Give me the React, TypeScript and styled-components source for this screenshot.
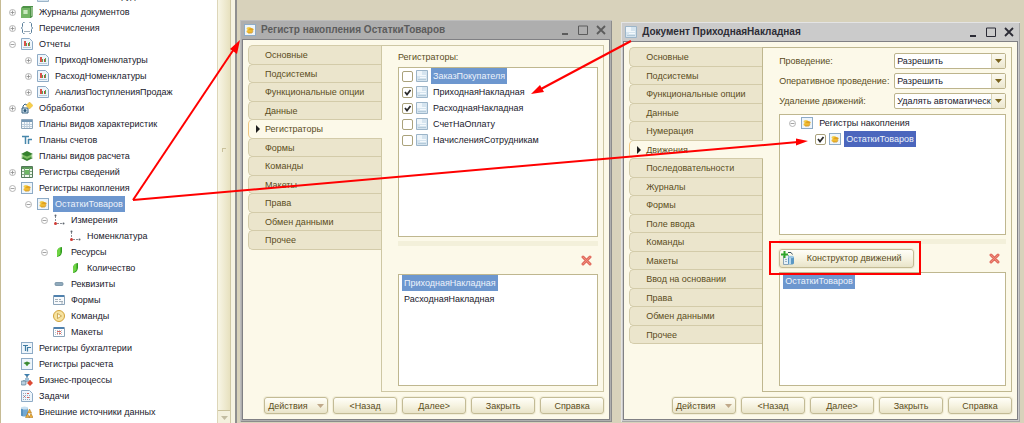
import React from "react";
import styled, { createGlobalStyle, css } from "styled-components";

const c = {
  paper: "#fcf9e9",
  tab: "#ebe5cc",
  tabLine: "#d3cba9",
  line: "#bfb78f",
  ink: "#5b4d1c",
  text: "#20202c",
  pick: "#6d97cf",
  pickActive: "#4b66bd",
  desk: "#d8d2bb",
  red: "#ff0000",
};

const GlobalStyle = createGlobalStyle`
  *, *::before, *::after { box-sizing: border-box; }
  body { margin: 0; background: ${c.desk}; }
  body, button, select, input {
    font-family: "Liberation Sans", Arial, sans-serif;
    font-size: 9px;
    line-height: 16px;
  }
`;

/* ---------- page ---------- */

const Page = styled.div`
  position: relative;
  display: flex;
  min-height: 100vh;
  overflow: hidden;
`;

const Sidebar = styled.aside`
  flex: none;
  display: flex;
  width: 237px;
  border-left: 1px solid #c6bb94;
  border-right: 2px solid #8f8f8f;
  background: #fff;
`;

/* The list is scrolled: its first row is cut by the top edge. */
const Tree = styled.ul`
  flex: 1;
  min-width: 0;
  margin: -12px 0 0;
  padding: 0 0 0 2px;
  list-style: none;
`;

const ScrollBar = styled.div`
  display: flex;
  flex-direction: column;
  align-items: center;
  justify-content: space-between;
  width: 14px;
  border-left: 1px solid #ddd6b8;
  border-right: 1px solid #cfc8a4;
  background: linear-gradient(90deg, #f8f6e6, #e7e1bf);
`;

const ScrollGrip = styled.span`
  width: 4px;
  height: 4px;
  margin-top: 148px;
  border-top: 1px solid #c9c19b;
  border-left: 1px solid #c9c19b;
`;

const ScrollDown = styled.button`
  display: flex;
  align-items: center;
  justify-content: center;
  width: 100%;
  height: 13px;
  padding: 2px 0 0;
  border: 0;
  border-top: 1px solid #c9c19b;
  background: #f4f1de;
`;

const Gutter = styled.div`
  width: 4px;
  background: #f6f3e2;
`;

const Desktop = styled.main`
  flex: 1;
  display: flex;
  gap: 9px;
  min-width: 0;
  padding: 20px 4px 1px 3px;
`;

/* ---------- tree rows ---------- */

const Row = styled.li<{ $level?: number }>`
  display: flex;
  align-items: center;
  height: 16px;
  padding-left: ${(p) => (p.$level ?? 0) * 16}px;
  color: ${c.text};
  white-space: nowrap;
`;

const Twisty = styled.span`
  flex: none;
  display: flex;
  justify-content: center;
  width: 18px;
`;

const RowText = styled.span<{ $pick?: "soft" | "strong" }>`
  margin-left: 4px;
  padding: 0 2px;
  ${(p) =>
    p.$pick &&
    css`
      background: ${p.$pick === "soft" ? c.pick : c.pickActive};
      color: #eef3fb;
    `}
`;

const PlainRow = styled.li`
  display: flex;
  height: 16px;
  color: ${c.text};
  white-space: nowrap;
`;

const PlainText = styled(RowText)`
  margin-left: 0;
`;

/* ---------- windows ---------- */

const Frame = styled.section<{ $grow: number; $active?: boolean }>`
  flex: ${(p) => p.$grow} 1 0;
  display: flex;
  flex-direction: column;
  min-width: 0;
  margin-top: ${(p) => (p.$active ? 2 : 0)}px;
  padding: 0 2px 2px;
  background: ${(p) => (p.$active ? "#cbcbcb" : "#aeaeae")};
  box-shadow: inset 1px 1px 0 ${(p) => (p.$active ? "#e4e4e4" : "#bdbdbd")},
    inset -1px -1px 0 ${(p) => (p.$active ? "#a9a9a9" : "#8c8c8c")};
`;

const TitleBar = styled.header<{ $active?: boolean }>`
  display: flex;
  align-items: center;
  height: 19px;
  padding-left: 2px;
  gap: 5px;
  color: ${(p) => (p.$active ? "#2b2b35" : "#5c5c5c")};
`;

const Title = styled.h1`
  flex: 1;
  min-width: 0;
  margin: 0;
  font-size: 10px;
  line-height: 16px;
  white-space: nowrap;
`;

const TitleButtons = styled.div`
  display: flex;
`;

const TitleButton = styled.button`
  display: flex;
  align-items: center;
  justify-content: center;
  width: 18px;
  height: 18px;
  padding: 0;
  border: 0;
  background: none;
  color: inherit;
`;

const Body = styled.div`
  flex: 1;
  display: flex;
  flex-direction: column;
  gap: 5px;
  padding: 5px;
  border: 1px solid #808084;
  background: ${c.paper};
`;

const Split = styled.div`
  flex: 1;
  display: flex;
`;

const Tabs = styled.nav`
  position: relative;
  flex: none;
  display: flex;
  flex-direction: column;
  width: 133px;
`;

const Tab = styled.button<{ $on?: boolean }>`
  display: flex;
  align-items: center;
  width: 133px;
  height: 20px;
  margin-bottom: -1px;
  padding: 0 0 0 16px;
  border: 1px solid ${c.tabLine};
  border-right: 0;
  border-radius: 5px 0 0 5px;
  background: ${c.tab};
  color: ${c.ink};
  white-space: nowrap;
  &:nth-child(even) {
    height: 19px;
  }
  ${(p) =>
    p.$on &&
    css`
      position: relative;
      width: 134px;
      padding-left: 7px;
      gap: 5px;
      border-left-color: #f0c580;
      background: ${c.paper};
    `}
`;

const Panel = styled.div<{ $top: number; $active?: boolean }>`
  flex: 1;
  display: flex;
  flex-direction: column;
  min-width: 0;
  padding: ${(p) => p.$top}px 5px 5px 16px;
  border: 1px solid ${(p) => (p.$active ? c.line : "#cec7a4")};
`;

const Caption = styled.div`
  height: 18px;
  color: ${c.ink};
`;

const List = styled.ul<{ $height?: number }>`
  flex: ${(p) => (p.$height ? "none" : "1")};
  height: ${(p) => (p.$height ? p.$height + "px" : "auto")};
  margin: 0;
  padding: 0 3px;
  border: 1px solid ${c.line};
  background: #fff;
  list-style: none;
`;

const CheckRow = styled.label`
  display: flex;
  align-items: center;
  height: 16px;
  gap: 3px;
  color: ${c.text};
  white-space: nowrap;
`;

const CheckBox = styled.span`
  display: grid;
  flex: none;
  > * {
    grid-area: 1 / 1;
  }
  > svg {
    visibility: hidden;
    pointer-events: none;
  }
  > input:checked + svg {
    visibility: visible;
  }
`;

const CheckInput = styled.input`
  appearance: none;
  width: 11px;
  height: 11px;
  margin: 0;
  border: 1px solid #aaa27c;
  border-radius: 2px;
  background: #fff;
`;

const Splitter = styled.div`
  flex: none;
  height: 5px;
  margin-top: 4px;
  background: #f3f0da;
`;

const ToolRow = styled.div`
  flex: none;
  display: flex;
  align-items: center;
  justify-content: space-between;
  height: 28px;
  padding: 0 6px 0 0;
`;

const RemoveButton = styled.button`
  display: flex;
  margin-left: auto;
  padding: 0;
  border: 0;
  background: none;
`;

const buttonLook = css`
  border: 1px solid #c3bb95;
  border-radius: 3px;
  background: linear-gradient(#fffef8, #f6f3e1 50%, #e9e4c9);
  box-shadow: 0 0 0 1px #f2eed9;
  color: ${c.ink};
`;

const Footer = styled.footer`
  display: flex;
  justify-content: flex-end;
  gap: 5px;
`;

const FooterButton = styled.button<{ $menu?: boolean }>`
  ${buttonLook}
  display: flex;
  align-items: center;
  justify-content: ${(p) => (p.$menu ? "space-between" : "center")};
  width: 64px;
  height: 17px;
  padding: 0 ${(p) => (p.$menu ? 3 : 0)}px;
`;

const Callout = styled.div`
  position: relative;
  &::after {
    content: "";
    position: absolute;
    inset: -8px -7px -7px -10px;
    border: 2px solid ${c.red};
    pointer-events: none;
  }
`;

const BuilderButton = styled.button`
  ${buttonLook}
  display: flex;
  align-items: center;
  width: 135px;
  height: 19px;
  padding: 0 0 0 1px;
  > span {
    flex: 1;
    text-align: center;
  }
`;

const Fields = styled.div`
  display: grid;
  grid-template-columns: 115px 1fr;
  gap: 4px 0;
  padding-bottom: 5px;
`;

const FieldLabel = styled.label`
  color: ${c.ink};
  white-space: nowrap;
`;

const SelectBox = styled.div`
  display: grid;
  grid-template-columns: 1fr 14px;
  height: 16px;
  border: 1px solid #bdb48c;
  border-radius: 2px;
  background: #fff;
`;

const Select = styled.select`
  appearance: none;
  min-width: 0;
  height: 14px;
  padding: 0 0 0 2px;
  border: 0;
  background: none;
  color: ${c.text};
  line-height: 14px;
  text-overflow: clip;
`;

const SelectArrow = styled.span`
  display: flex;
  align-items: center;
  justify-content: center;
  border-left: 1px solid #ddd6b8;
  background: linear-gradient(#fbf9ee, #ece7cf);
`;

const Arrows = styled.svg`
  position: absolute;
  top: 0;
  left: 0;
  pointer-events: none;
`;

/* ---------- icons ---------- */

type IconName =
  | "journal" | "enum" | "report" | "process" | "chars" | "accounts" | "calc"
  | "info" | "accum" | "axis" | "resource" | "attr" | "form" | "command"
  | "template" | "accReg" | "calcReg" | "business" | "task" | "external" | "doc";

const sheet = <rect x=".5" y=".5" width="11" height="11" fill="#eef5fb" stroke="#8eabc6" />;

const art: Record<IconName, React.ReactNode> = {
  journal: (
    <>
      <path d="M0 2l2-2h10v10l-2 2H0z" fill="#4d9247" />
      <path d="M0 2h9v10H0z" fill="#74b566" />
      <path d="M2 4h5v4H2z" fill="#a9d79b" />
      <path d="M3 5h3M3 7h3" stroke="#eefae8" />
      <path d="M11 1v9" stroke="#d5ebce" />
    </>
  ),
  enum: (
    <>
      <path d="M3.500 .5h-1l-1 1v3L.5 6l1 1.500v3l1 1h1M8.500 .5h1l1 1v3L11.500 6l-1 1.500v3l-1 1h-1" fill="none" stroke="#5a7f9b" />
      <path d="M3.500 9.500h1M5.500 9.500h1M7.500 9.500h1" stroke="#3c5a70" />
    </>
  ),
  report: (
    <>
      <path d="M.5 .5h8l3 3v8H.5z" fill="#eef5fb" stroke="#8eabc6" />
      <path d="M3 3h2v5H3z" fill="#d9534a" />
      <path d="M5 5h1v3H5zM8 4h1v4H8z" fill="#5aa64f" />
      <path d="M7 5h1v3H7z" fill="#c5473f" />
      <path d="M2 9.500h8" stroke="#b9cad8" />
    </>
  ),
  process: (
    <>
      <path d="M1 6h6v5H1z" fill="#d5e6f2" stroke="#37607f" />
      <path d="M2 6V4l2-2 2 1" fill="none" stroke="#37607f" />
      <circle cx="4" cy="8.500" r="1.500" fill="#2d5978" />
      <path d="M8.500 0L12 3.500 8.500 7 5 3.500z" fill="#f6cf4a" stroke="#e2ac2e" strokeWidth=".5" />
    </>
  ),
  chars: (
    <>
      <path d="M.5 1.500h11v9H.5z" fill="#f6fafc" stroke="#8ea7bb" />
      <path d="M1 2h10v2H1z" fill="#7397b5" />
      <path d="M3.500 4v6M6 4v6M8.500 4v6M1 6.500h10M1 8.500h10" stroke="#bccddb" />
    </>
  ),
  accounts: (
    <path d="M1 2.500h7M4.500 2v8M7.500 10V5M7 5.500h4" fill="none" stroke="#4787ab" strokeWidth="1.500" />
  ),
  calc: (
    <>
      <path d="M0 8l6-2.500L12 8l-6 3z" fill="#3a8531" />
      <path d="M0 6l6-2.500L12 6 6 9z" fill="#7dbd62" />
      <path d="M0 4l6-3 6 3-6 2.500z" fill="#35802d" />
    </>
  ),
  info: (
    <>
      <path d="M.5 .5h11v11H.5z" fill="#eff7ed" stroke="#54785a" />
      <path d="M1 1h10v2H1z" fill="#5b9a58" />
      <path d="M3.500 2v9M8.500 2v9M1 5.500h10M1 8.500h10" stroke="#7aa57b" />
      <path d="M4 4h4v4H4z" fill="#6fb864" />
    </>
  ),
  accum: (
    <>
      {sheet}
      <ellipse cx="5" cy="4.500" rx="2.500" ry="1.500" fill="#f4ce4a" />
      <ellipse cx="7" cy="5.500" rx="2.700" ry="1.500" fill="#e0a01d" />
      <ellipse cx="5.500" cy="7.500" rx="3" ry="1.700" fill="#f0bb32" />
      <path d="M4 9h4l1-2" fill="none" stroke="#c98a17" strokeWidth=".7" />
    </>
  ),
  axis: (
    <>
      <path d="M2.500 2v7M4 9.500h7" stroke="#8a8f96" strokeDasharray="2 1" />
      <circle cx="2.500" cy="1.500" r="1" fill="#5f666e" />
      <circle cx="2.500" cy="9.500" r="1.500" fill="#d23b35" />
      <circle cx="10.500" cy="9.500" r="1" fill="#5f666e" />
    </>
  ),
  resource: (
    <>
      <path d="M4 5.500C4.500 3 6 1.500 9 1v5C8.500 9 7 10.500 4 11z" fill="#2f9a1e" />
      <path d="M4 5.500C4.500 3 6 1.500 7.500 1.500V8L4 11z" fill="#6fd444" />
    </>
  ),
  attr: <rect x="2" y="4.500" width="8" height="3" rx="1" fill="#8fa9bb" stroke="#66849a" strokeWidth=".7" />,
  form: (
    <>
      <path d="M.5 1.500h11v9H.5z" fill="#f8fafc" stroke="#8ba3b8" />
      <path d="M1 1h10v2H1z" fill="#4f81ae" />
      <path d="M2 5.500h3M2 7.500h3M6 5.500h2M6 7.500h4M8 9h2" stroke="#a2aeb8" />
    </>
  ),
  command: (
    <>
      <circle cx="6" cy="6" r="5.500" fill="#f7e3a0" stroke="#d0a23a" />
      <path d="M4.500 3.500v5l4-2.500z" fill="#fffbe8" stroke="#b98d2c" strokeWidth=".7" />
    </>
  ),
  template: (
    <>
      <path d="M.5 1.500h11v9H.5z" fill="#fff" stroke="#8ba3b8" />
      <path d="M1 1h10v2H1z" fill="#4f81ae" />
      <path d="M2 4.500h8M2 6.500h8M2 8.500h8" stroke="#b8c4ce" strokeDasharray="1 1" />
      <path d="M4 5h4v1H4zM4 7h1v1H4zM6 7h2v1H6z" fill="#dd6a64" />
    </>
  ),
  accReg: (
    <>
      {sheet}
      <path d="M2 3.500h5M4.500 3v6M6.500 9.500v-4M6 5.500h4" fill="none" stroke="#3f7ca3" strokeWidth="1.200" />
    </>
  ),
  calcReg: (
    <>
      {sheet}
      <path d="M2.500 5L6 3.500 9.500 5 6 7.500z" fill="#3c8a33" />
      <path d="M5 7h2v1H5z" fill="#7dbd62" />
    </>
  ),
  business: (
    <>
      <path d="M3 0h6L6 3z" fill="#3f7fae" />
      <path d="M6 2v4M2 7h8" stroke="#4b6f8a" />
      <path d="M4 4h4v3H4z" fill="#9fc0d8" />
      <rect x="0" y="7" width="5" height="4" rx="1" fill="#b9cfdf" stroke="#55788f" strokeWidth=".7" />
      <path d="M9 6l3 3-3 3-3-3z" fill="#dd4a35" />
    </>
  ),
  task: (
    <>
      <path d="M.5 .5h8l3 3v8H.5z" fill="#eef5fb" stroke="#8eabc6" />
      <path d="M2 3.500h6M2 5.500h8M2 7.500h8M2 9.500h8" stroke="#98a9b8" strokeDasharray="1 1" />
      <path d="M6 3h2v1H6zM3 6h1v1H3zM6 7h2v1H6z" fill="#d8625c" />
    </>
  ),
  external: (
    <>
      <path d="M0 2v7c0 2 7 2 7 0V2z" fill="#74a9d2" />
      <ellipse cx="3.500" cy="2" rx="3.500" ry="1.500" fill="#c8e0f1" />
      <path d="M1 3v7" stroke="#3f7cab" />
      <path d="M8.500 3l2 4h-4zM6.500 7.500l2 4h-4zM10 7.500l2 4H8z" fill="#eeb03a" stroke="#a46d16" strokeWidth=".5" />
    </>
  ),
  doc: (
    <>
      <path d="M.5 .5h11v11H.5z" fill="#d5e4ef" stroke="#9cb5c9" />
      <path d="M1 1h5v5H1z" fill="#eef5fa" />
      <path d="M4 5.500h6M4 7.500h6" stroke="#f4f9fc" />
      <path d="M2 9.500h8" stroke="#b4cad9" />
    </>
  ),
};

const Svg = styled.svg`
  flex: none;
  display: block;
`;

const Icon = ({ name }: { name: IconName }) => (
  <Svg width="12" height="12" viewBox="0 0 12 12" aria-hidden="true">{art[name]}</Svg>
);

const Toggle = ({ open }: { open: boolean }) => (
  <Svg width="7" height="7" viewBox="0 0 7 7" aria-hidden="true">
    <circle cx="3.500" cy="3.500" r="3" fill="#fff" stroke="#a4a4a4" strokeWidth=".8" />
    <path d={open ? "M1.500 3.500h4" : "M1.500 3.500h4M3.500 1.500v4"} stroke="#8c8c8c" strokeWidth=".8" />
  </Svg>
);

const Down = ({ color }: { color: string }) => (
  <Svg width="7" height="4" viewBox="0 0 7 4" aria-hidden="true">
    <path d="M0 0h7L3.500 4z" fill={color} />
  </Svg>
);

const RemoveIcon = () => (
  <Svg width="11" height="11" viewBox="0 0 11 11" aria-hidden="true">
    <path d="M2 2l7 7M9 2l-7 7" stroke="#e06a5c" strokeWidth="3" strokeLinecap="round" />
    <path d="M2 2l7 7M9 2l-7 7" stroke="#f08a7a" strokeWidth="1" strokeLinecap="round" />
  </Svg>
);

const BuilderIcon = () => (
  <Svg width="14" height="14" viewBox="0 0 14 14" aria-hidden="true">
    <path d="M2.500 5v8.500h5V4" fill="#e8f1f7" stroke="#8aa4b8" />
    <path d="M4 8.500h2M4 10.500h2" stroke="#9bb3c4" />
    <path d="M7 6v6c0 2 6 2 6 0V6z" fill="#5b98c4" />
    <path d="M8 6v7h2V6z" fill="#b9d9ee" />
    <ellipse cx="10" cy="6" rx="3" ry="1.300" fill="#9cc7e3" />
    <path d="M7 1.500h3l1.500 2" fill="none" stroke="#3c5361" />
    <path d="M3.500 0v7M0 3.500h7" stroke="#2fa52b" strokeWidth="2" />
  </Svg>
);

/* ---------- shared pieces ---------- */

type Node = { text: string; icon: IconName; level?: number; open?: boolean; picked?: boolean };

const nodes: Node[] = [
  { text: "НачисленияСотрудникам", icon: "doc", level: 1 },
  { text: "Журналы документов", icon: "journal", open: false },
  { text: "Перечисления", icon: "enum", open: false },
  { text: "Отчеты", icon: "report", open: true },
  { text: "ПриходНоменклатуры", icon: "report", level: 1, open: false },
  { text: "РасходНоменклатуры", icon: "report", level: 1, open: false },
  { text: "АнализПоступленияПродаж", icon: "report", level: 1, open: false },
  { text: "Обработки", icon: "process", open: false },
  { text: "Планы видов характеристик", icon: "chars" },
  { text: "Планы счетов", icon: "accounts" },
  { text: "Планы видов расчета", icon: "calc" },
  { text: "Регистры сведений", icon: "info", open: false },
  { text: "Регистры накопления", icon: "accum", open: true },
  { text: "ОстаткиТоваров", icon: "accum", level: 1, open: true, picked: true },
  { text: "Измерения", icon: "axis", level: 2, open: true },
  { text: "Номенклатура", icon: "axis", level: 3 },
  { text: "Ресурсы", icon: "resource", level: 2, open: true },
  { text: "Количество", icon: "resource", level: 3 },
  { text: "Реквизиты", icon: "attr", level: 2 },
  { text: "Формы", icon: "form", level: 2 },
  { text: "Команды", icon: "command", level: 2 },
  { text: "Макеты", icon: "template", level: 2 },
  { text: "Регистры бухгалтерии", icon: "accReg" },
  { text: "Регистры расчета", icon: "calcReg" },
  { text: "Бизнес-процессы", icon: "business" },
  { text: "Задачи", icon: "task" },
  { text: "Внешние источники данных", icon: "external" },
];

const Check = ({ on }: { on?: boolean }) => (
  <CheckBox>
    <CheckInput type="checkbox" defaultChecked={on} />
    <Svg width="11" height="11" viewBox="0 0 11 11" aria-hidden="true">
      <path d="M3 5l2 2.500L8.500 3" fill="none" stroke="#2b2b2b" strokeWidth="1.800" />
    </Svg>
  </CheckBox>
);

type WinProps = {
  title: string;
  icon: IconName;
  grow: number;
  active?: boolean;
  top: number;
  tabs: string[];
  current: string;
  children: React.ReactNode;
};

const Win = ({ title, icon, grow, active, top, tabs, current, children }: WinProps) => (
  <Frame $grow={grow} $active={active}>
    <TitleBar $active={active}>
      <Icon name={icon} />
      <Title>{title}</Title>
      <TitleButtons>
        <TitleButton aria-label="Свернуть">
          <Svg width="10" height="10" viewBox="0 0 10 10"><path d="M2 9h6" stroke="currentColor" strokeWidth="2" /></Svg>
        </TitleButton>
        <TitleButton aria-label="Развернуть">
          <Svg width="10" height="10" viewBox="0 0 10 10"><path d="M.5 1h9v8.500h-9z" fill="none" stroke="currentColor" /></Svg>
        </TitleButton>
        <TitleButton aria-label="Закрыть окно">
          <Svg width="10" height="10" viewBox="0 0 10 10"><path d="M1 1l8 8M9 1L1 9" stroke="currentColor" strokeWidth="1.800" /></Svg>
        </TitleButton>
      </TitleButtons>
    </TitleBar>
    <Body>
      <Split>
        <Tabs>
          {tabs.map((t) => (
            <Tab key={t} $on={t === current}>
              {t === current && (
                <Svg width="4" height="8" viewBox="0 0 4 8" aria-hidden="true"><path d="M0 0l4 4-4 4z" fill="#1e1e1e" /></Svg>
              )}
              {t}
            </Tab>
          ))}
        </Tabs>
        <Panel $top={top} $active={active}>{children}</Panel>
      </Split>
      <Footer>
        <FooterButton $menu>Действия<Down color="#c0a98a" /></FooterButton>
        <FooterButton>&lt;Назад</FooterButton>
        <FooterButton>Далее&gt;</FooterButton>
        <FooterButton>Закрыть</FooterButton>
        <FooterButton>Справка</FooterButton>
      </Footer>
    </Body>
  </Frame>
);

const registrars: [string, boolean][] = [
  ["ЗаказПокупателя", false],
  ["ПриходнаяНакладная", true],
  ["РасходнаяНакладная", true],
  ["СчетНаОплату", false],
  ["НачисленияСотрудникам", false],
];

const fields: [string, string, string][] = [
  ["posting", "Проведение:", "Разрешить"],
  ["realtime", "Оперативное проведение:", "Разрешить"],
  ["removal", "Удаление движений:", "Удалять автоматически"],
];

export default function App() {
  return (
    <Page>
      <GlobalStyle />
      <Sidebar>
        <Tree>
          {nodes.map((n, i) => (
            <Row key={i} $level={n.level}>
              <Twisty>{n.open !== undefined && <Toggle open={n.open} />}</Twisty>
              <Icon name={n.icon} />
              <RowText $pick={n.picked ? "soft" : undefined}>{n.text}</RowText>
            </Row>
          ))}
        </Tree>
        <ScrollBar>
          <ScrollGrip />
          <ScrollDown aria-label="Прокрутить вниз"><Down color="#c3bda2" /></ScrollDown>
        </ScrollBar>
        <Gutter />
      </Sidebar>

      <Desktop>
        <Win
          title="Регистр накопления ОстаткиТоваров"
          icon="accum"
          grow={372}
          top={3}
          current="Регистраторы"
          tabs={["Основные", "Подсистемы", "Функциональные опции", "Данные", "Регистраторы", "Формы", "Команды", "Макеты", "Права", "Обмен данными", "Прочее"]}
        >
          <Caption>Регистраторы:</Caption>
          <List $height={170}>
            {registrars.map(([name, on], i) => (
              <li key={name}>
                <CheckRow>
                  <Check on={on} />
                  <Icon name="doc" />
                  <PlainText $pick={i === 0 ? "soft" : undefined}>{name}</PlainText>
                </CheckRow>
              </li>
            ))}
          </List>
          <Splitter />
          <ToolRow>
            <RemoveButton aria-label="Удалить"><RemoveIcon /></RemoveButton>
          </ToolRow>
          <List>
            <PlainRow><PlainText $pick="soft">ПриходнаяНакладная</PlainText></PlainRow>
            <PlainRow><PlainText>РасходнаяНакладная</PlainText></PlainRow>
          </List>
        </Win>

        <Win
          title="Документ ПриходнаяНакладная"
          icon="doc"
          grow={399}
          active
          top={5}
          current="Движения"
          tabs={["Основные", "Подсистемы", "Функциональные опции", "Данные", "Нумерация", "Движения", "Последовательности", "Журналы", "Формы", "Поле ввода", "Команды", "Макеты", "Ввод на основании", "Права", "Обмен данными", "Прочее"]}
        >
          <Fields>
            {fields.map(([id, label, value]) => (
              <React.Fragment key={id}>
                <FieldLabel htmlFor={id}>{label}</FieldLabel>
                <SelectBox>
                  <Select id={id}><option>{value}</option></Select>
                  <SelectArrow><Down color="#7a6420" /></SelectArrow>
                </SelectBox>
              </React.Fragment>
            ))}
          </Fields>
          <List $height={121}>
            <Row>
              <Twisty><Toggle open /></Twisty>
              <Icon name="accum" />
              <RowText>Регистры накопления</RowText>
            </Row>
            <Row $level={2}>
              <CheckRow>
                <Check on />
                <Icon name="accum" />
                <PlainText $pick="strong">ОстаткиТоваров</PlainText>
              </CheckRow>
            </Row>
          </List>
          <Splitter />
          <ToolRow>
            <Callout>
              <BuilderButton><BuilderIcon /><span>Конструктор движений</span></BuilderButton>
            </Callout>
            <RemoveButton aria-label="Удалить"><RemoveIcon /></RemoveButton>
          </ToolRow>
          <List>
            <PlainRow><PlainText $pick="soft">ОстаткиТоваров</PlainText></PlainRow>
          </List>
        </Win>
      </Desktop>

      <Arrows width="1024" height="423" viewBox="0 0 1024 423" aria-hidden="true">
        <g stroke={c.red} strokeWidth="2" fill="none">
          <path d="M133 200L234 49" />
          <path d="M133 200L798 142" />
          <path d="M631 41L541 89" />
        </g>
        <g fill={c.red}>
          <path d="M240 40L237 54 230 49z" />
          <path d="M808 141L796 145.500 796 138.500z" />
          <path d="M531 94L540 85 544 92z" />
        </g>
      </Arrows>
    </Page>
  );
}
